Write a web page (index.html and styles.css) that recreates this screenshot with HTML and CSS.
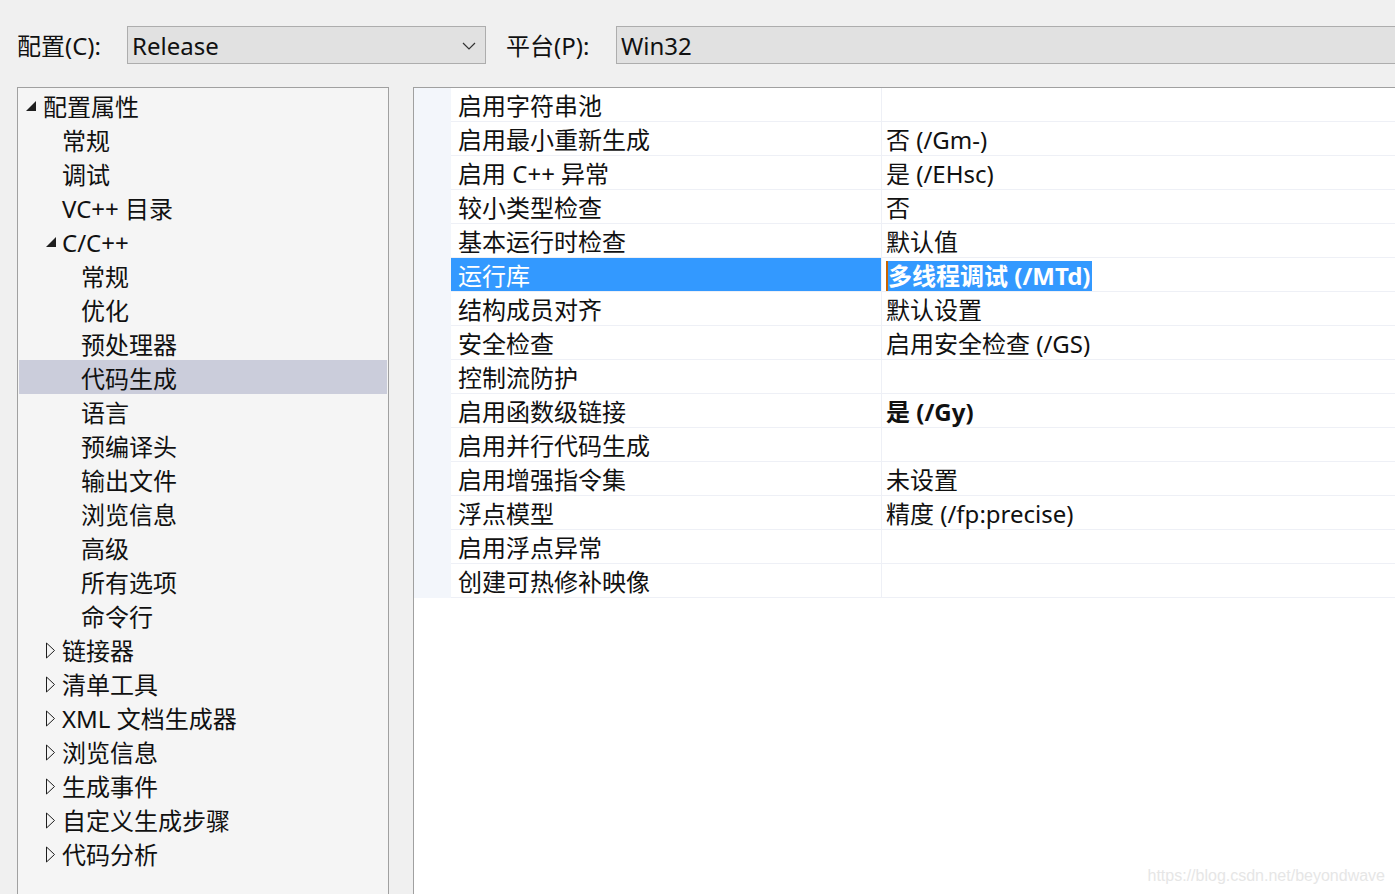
FILE: index.html
```html
<!DOCTYPE html>
<html lang="zh-CN">
<head>
    <meta charset="UTF-8">
    <title>属性页</title>
    <link rel="stylesheet" href="styles.css">
</head>
<body>
    <div class="toolbar">
        <span class="label label-config">配置(C):</span>
        <div class="combo combo-config">
            <span>Release</span>
            <svg class="chevron" width="14" height="8" viewBox="0 0 14 8"><path d="M1 1 L7 7 L13 1" fill="none" stroke="#333" stroke-width="1.2"/></svg>
        </div>
        <span class="label label-platform">平台(P):</span>
        <div class="combo combo-platform"><span>Win32</span></div>
    </div>

    <div class="main">
        <div class="tree" id="tree"></div>
        <div class="grid" id="grid"></div>
    </div>

    <div class="watermark">https://blog.csdn.net/beyondwave</div>

    <script>
    // 树节点: [层级, 文本, 状态, 选中] 状态: open / closed / 空
    const treeItems = [
        [0, '配置属性', 'open'],
        [1, '常规'],
        [1, '调试'],
        [1, 'VC++ 目录'],
        [1, 'C/C++', 'open'],
        [2, '常规'],
        [2, '优化'],
        [2, '预处理器'],
        [2, '代码生成', '', true],
        [2, '语言'],
        [2, '预编译头'],
        [2, '输出文件'],
        [2, '浏览信息'],
        [2, '高级'],
        [2, '所有选项'],
        [2, '命令行'],
        [1, '链接器', 'closed'],
        [1, '清单工具', 'closed'],
        [1, 'XML 文档生成器', 'closed'],
        [1, '浏览信息', 'closed'],
        [1, '生成事件', 'closed'],
        [1, '自定义生成步骤', 'closed'],
        [1, '代码分析', 'closed']
    ];

    const props = [
        ['启用字符串池', ''],
        ['启用最小重新生成', '否 (/Gm-)'],
        ['启用 C++ 异常', '是 (/EHsc)'],
        ['较小类型检查', '否'],
        ['基本运行时检查', '默认值'],
        ['运行库', '多线程调试 (/MTd)', 'selected'],
        ['结构成员对齐', '默认设置'],
        ['安全检查', '启用安全检查 (/GS)'],
        ['控制流防护', ''],
        ['启用函数级链接', '是 (/Gy)', 'bold'],
        ['启用并行代码生成', ''],
        ['启用增强指令集', '未设置'],
        ['浮点模型', '精度 (/fp:precise)'],
        ['启用浮点异常', ''],
        ['创建可热修补映像', '']
    ];

    const openIcon = '<svg width="12" height="12" viewBox="0 0 12 12"><path d="M11 1 L11 11 L1 11 Z" fill="#1e1e1e"/></svg>';
    const closedIcon = '<svg width="11" height="17" viewBox="0 0 11 17"><path d="M1.5 1 L9.5 8.5 L1.5 16 Z" fill="none" stroke="#1e1e1e" stroke-width="1"/></svg>';

    const tree = document.getElementById('tree');
    treeItems.forEach(([level, text, state, selected]) => {
        const row = document.createElement('div');
        row.className = 'tree-row level-' + level + (selected ? ' selected' : '');
        let icon = '';
        if (state === 'open') icon = openIcon;
        if (state === 'closed') icon = closedIcon;
        row.innerHTML = `<span class="toggle">${icon}</span><span class="tree-text">${text}</span>`;
        tree.appendChild(row);
    });

    const grid = document.getElementById('grid');
    props.forEach(([name, value, kind]) => {
        const row = document.createElement('div');
        row.className = 'prop-row' + (kind ? ' ' + kind : '');
        row.innerHTML = `
            <div class="gutter"></div>
            <div class="prop-name">${name}</div>
            <div class="prop-value"><span>${value}</span></div>
        `;
        grid.appendChild(row);
    });
    </script>
</body>
</html>
```

FILE: styles.css
```css
body {
    margin: 0;
    background-color: #f0f0f0;
    font-family: "Noto Sans", "Noto Sans CJK SC", sans-serif;
    font-size: 24px;
    color: #111;
    height: 894px;
    overflow: hidden;
    position: relative;
}
.toolbar {
    display: flex;
    align-items: center;
    padding: 26px 0 0 17px;
    height: 38px;
}
.label {
    line-height: 38px;
    padding-top: 1px;
    white-space: nowrap;
}
.label-config {
    width: 110px;
}
.label-platform {
    margin-left: 20px;
    width: 110px;
}
.combo {
    box-sizing: border-box;
    height: 38px;
    background-color: #e1e1e1;
    border: 1px solid #adadad;
    display: flex;
    align-items: center;
    padding: 1px 0 0 4px;
    line-height: 36px;
}
.combo-config {
    width: 359px;
    justify-content: space-between;
    padding-right: 9px;
}
.combo-platform {
    flex: 1;
    margin-right: -10px;
}
.chevron {
    margin-top: 1px;
}
.main {
    display: flex;
    padding: 23px 0 0 17px;
    gap: 24px;
}
.tree {
    box-sizing: border-box;
    width: 372px;
    height: 830px;
    border: 1px solid #a0a0a0;
    background-color: #f5f5f5;
    padding: 0 1px;
}
.tree-row {
    box-sizing: border-box;
    display: flex;
    align-items: center;
    height: 34px;
    white-space: nowrap;
}
.tree-text {
    line-height: 34px;
    padding-top: 3px;
}
.tree-row.level-0 {
    padding-left: 6px;
}
.tree-row.level-1 {
    padding-left: 25px;
}
.tree-row.level-2 {
    padding-left: 44px;
}
.tree-row.selected {
    background-color: #cbcddb;
}
.toggle {
    width: 18px;
    flex-shrink: 0;
    display: flex;
    align-items: center;
}
.tree-row.level-0 .toggle svg {
    margin-top: 2px;
}
.tree-row.level-1 .toggle svg {
    margin-left: 1px;
    margin-top: 2px;
}
.grid {
    box-sizing: border-box;
    flex: 1;
    height: 830px;
    margin-right: -10px;
    border: 1px solid #a0a0a0;
    background-color: #fff;
}
.prop-row {
    display: grid;
    grid-template-columns: 37px 430px 1fr;
    height: 34px;
    white-space: nowrap;
}
.gutter {
    background-color: #f3f6fb;
}
.prop-name,
.prop-value {
    box-sizing: border-box;
    padding-top: 2px;
    line-height: 31px;
    border-bottom: 1px solid #eef0f6;
}
.prop-name {
    padding-left: 7px;
}
.prop-value {
    padding-left: 4px;
    border-left: 1px solid #eef0f6;
}
.prop-row.bold .prop-value {
    font-weight: bold;
}
.prop-row.selected .prop-name {
    background-color: #3399ff;
    color: #fff;
}
.prop-row.selected .prop-value span {
    display: inline-block;
    line-height: 30px;
    background-color: #3399ff;
    color: #fff;
    font-weight: bold;
    border-left: 2px solid #c86400;
    padding-right: 2px;
}
.watermark {
    position: absolute;
    right: 10px;
    bottom: 9px;
    font-family: "Liberation Sans", Arial, sans-serif;
    font-size: 16px;
    color: #e6e6e6;
}
```
